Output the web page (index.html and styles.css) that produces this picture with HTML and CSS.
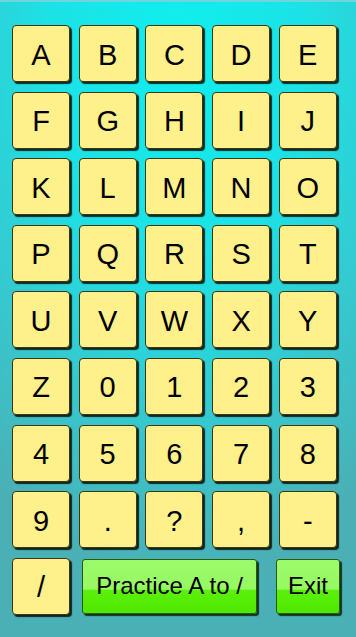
FILE: index.html
```html
<!DOCTYPE html>
<html>
<head>
<meta charset="utf-8">
<link rel="stylesheet" href="styles.css">
</head>
<body>
<div class="screen">
  <div class="grid">
    <div class="tile">A</div><div class="tile">B</div><div class="tile">C</div><div class="tile">D</div><div class="tile">E</div>
    <div class="tile">F</div><div class="tile">G</div><div class="tile">H</div><div class="tile">I</div><div class="tile">J</div>
    <div class="tile">K</div><div class="tile">L</div><div class="tile">M</div><div class="tile">N</div><div class="tile">O</div>
    <div class="tile">P</div><div class="tile">Q</div><div class="tile">R</div><div class="tile">S</div><div class="tile">T</div>
    <div class="tile">U</div><div class="tile">V</div><div class="tile">W</div><div class="tile">X</div><div class="tile">Y</div>
    <div class="tile">Z</div><div class="tile">0</div><div class="tile">1</div><div class="tile">2</div><div class="tile">3</div>
    <div class="tile">4</div><div class="tile">5</div><div class="tile">6</div><div class="tile">7</div><div class="tile">8</div>
    <div class="tile">9</div><div class="tile">.</div><div class="tile">?</div><div class="tile">,</div><div class="tile">-</div>
  </div>
  <div class="bottom">
    <div class="tile">/</div>
    <div class="btn practice">Practice A to /</div>
    <div class="btn exit">Exit</div>
  </div>
</div>
</body>
</html>
```

FILE: styles.css
```css
html, body {
  margin: 0;
  padding: 0;
}
body {
  width: 356px;
  height: 637px;
  overflow: hidden;
  font-family: "Liberation Sans", Arial, sans-serif;
}
.screen {
  box-sizing: border-box;
  width: 356px;
  height: 637px;
  padding: 25px 0 0 12px;
  box-shadow: inset 0 2px 0 #6cd6dc;
  background:
    radial-gradient(ellipse 320px 540px at 178px 40px, #10eeee 0%, #1ce2e6 40%, #36c8ce 72%, #4ab0b6 100%),
    #4aa8b0;
}
.grid {
  display: grid;
  grid-template-columns: repeat(5, 58px);
  grid-auto-rows: 57px;
  column-gap: 8.7px;
  row-gap: 9.6px;
}
.tile {
  box-sizing: border-box;
  width: 58px;
  height: 57px;
  background: #fef08a;
  border: 1px solid #3a3618;
  border-radius: 4px;
  box-shadow: 2px 2px 1px rgba(10, 10, 0, 0.85);
  display: flex;
  align-items: center;
  justify-content: center;
  font-size: 29px;
  color: #000;
  line-height: 1;
  padding-top: 3px;
}
.bottom {
  display: flex;
  align-items: flex-start;
  margin-top: 9.6px;
}
.btn {
  box-sizing: border-box;
  height: 55px;
  margin-top: 1px;
  border: 1px solid #2a5a10;
  border-radius: 3px;
  box-shadow: 2px 2px 1px rgba(10, 30, 0, 0.85);
  background: linear-gradient(to bottom, #9cfb6c 0%, #96f862 55%, #5cf00a 57%, #4fe800 100%);
  display: flex;
  align-items: center;
  justify-content: center;
  font-size: 24px;
  color: #000;
}
.practice {
  width: 175px;
  margin-left: 12px;
}
.exit {
  width: 64px;
  margin-left: 19px;
}
```
